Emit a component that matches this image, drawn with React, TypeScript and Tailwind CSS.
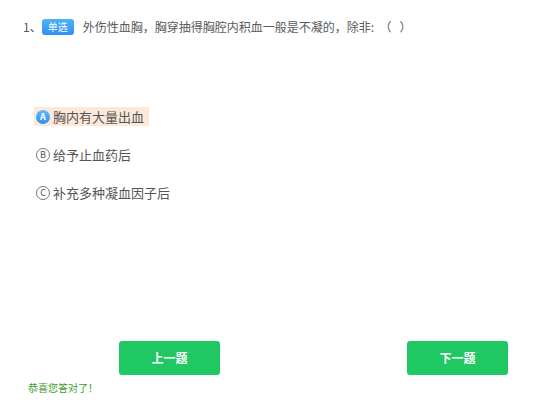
import React from 'react';

const options = [
  { key: 'A', text: '胸内有大量出血', selected: true },
  { key: 'B', text: '给予止血药后', selected: false },
  { key: 'C', text: '补充多种凝血因子后', selected: false },
];

export default function App() {
  return (
    <div
      className="w-[557px] h-[419px] bg-white flex flex-col text-[#555]"
      style={{ fontFamily: '"Noto Sans CJK SC", "Noto Sans", sans-serif' }}
    >
      <div className="flex items-center pl-[23px] pt-[18px] h-[36px] text-[12px]">
        <span className="text-[12px]">1、</span>
        <span className="h-[16px] w-[32px] rounded-[3px] bg-gradient-to-b from-[#4eb2fb] to-[#2f90f0] text-white text-[10px] leading-[16px] text-center">
          单选
        </span>
        <span className="ml-[9px] text-[#5a5a5a]">外伤性血胸，胸穿抽得胸腔内积血一般是不凝的，除非:&nbsp;&nbsp;（&nbsp;&nbsp;&nbsp;）</span>
      </div>

      <div className="flex flex-col gap-[19px] pl-[34px] mt-[71px]">
        {options.map((o) => (
          <div key={o.key} className="flex">
            <div
              className={`flex items-center h-[19px] pl-[2px] pr-[5px] ${
                o.selected ? 'bg-[#fde9da]' : ''
              }`}
            >
              {o.selected ? (
                <span className="w-[14px] h-[14px] rounded-full bg-gradient-to-b from-[#5bbaff] to-[#2d8ff0] text-white text-[9px] font-bold leading-[14px] text-center">
                  {o.key}
                </span>
              ) : (
                <span className="w-[14px] h-[14px] rounded-full border border-[#777] text-[#555] text-[9px] leading-[12px] text-center">
                  {o.key}
                </span>
              )}
              <span className="ml-[3px] text-[13px] text-[#555]">{o.text}</span>
            </div>
          </div>
        ))}
      </div>

      <div className="flex justify-between pl-[119px] pr-[49px] mt-[139px]">
        <button className="w-[101px] h-[34px] rounded-[3px] bg-[#1fc862] text-white text-[12px] font-bold">
          上一题
        </button>
        <button className="w-[101px] h-[34px] rounded-[3px] bg-[#1fc862] text-white text-[12px] font-bold">
          下一题
        </button>
      </div>

      <div className="pl-[28px] mt-[5px] text-[10px] text-[#3f9a2e]">恭喜您答对了！</div>
    </div>
  );
}
